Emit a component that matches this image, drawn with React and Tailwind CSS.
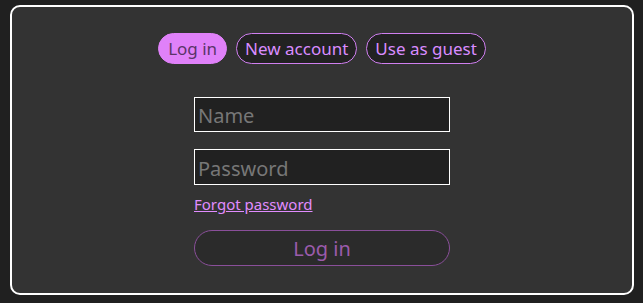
import React, { useState } from 'react'

const tabs = ['Log in', 'New account', 'Use as guest']

export default function App() {
  const [active, setActive] = useState('Log in')

  return (
    <div
      className="min-h-[303px] w-[643px] bg-[#202020] pl-[10px] pr-[9px] pt-[5px] pb-[8px]"
      style={{ fontFamily: '"Noto Sans", "Open Sans", sans-serif' }}
    >
      <div className="flex h-[290px] flex-col items-center rounded-[10px] border-2 border-white bg-[#333333] pt-[26px]">
        <div className="flex gap-[9px]">
          {tabs.map((t) => (
            <button
              key={t}
              onClick={() => setActive(t)}
              className={
                t === active
                  ? 'h-[31px] rounded-full border border-[#e081f9] bg-[#e081f9] px-[9px] text-[17px] leading-none text-[#5a3468]'
                  : 'h-[31px] rounded-full border border-[#d07ff0] bg-[#222222] px-[8px] text-[17px] leading-none text-[#d98cff]'
              }
            >
              {t}
            </button>
          ))}
        </div>

        <form className="mt-[33px] flex w-[256px] flex-col" onSubmit={(e) => e.preventDefault()}>
          <input
            placeholder="Name"
            className="h-[35px] border border-white bg-[#212121] px-[3px] pt-[2px] text-[20px] text-white outline-none placeholder:text-[#777777]"
          />
          <input
            type="password"
            placeholder="Password"
            className="mt-[17px] h-[36px] border border-white bg-[#212121] px-[3px] pt-[2px] text-[20px] text-white outline-none placeholder:text-[#777777]"
          />
          <a href="#" className="mt-[8px] self-start text-[15px] leading-[22px] text-[#e18cff] underline">
            Forgot password
          </a>
          <button
            type="submit"
            disabled
            className="mt-[15px] h-[36px] rounded-full border border-[#8a4f9a] bg-[#2b2b2b] pt-[2px] text-[20px] text-[#9b5bab]"
          >
            Log in
          </button>
        </form>
      </div>
    </div>
  )
}
